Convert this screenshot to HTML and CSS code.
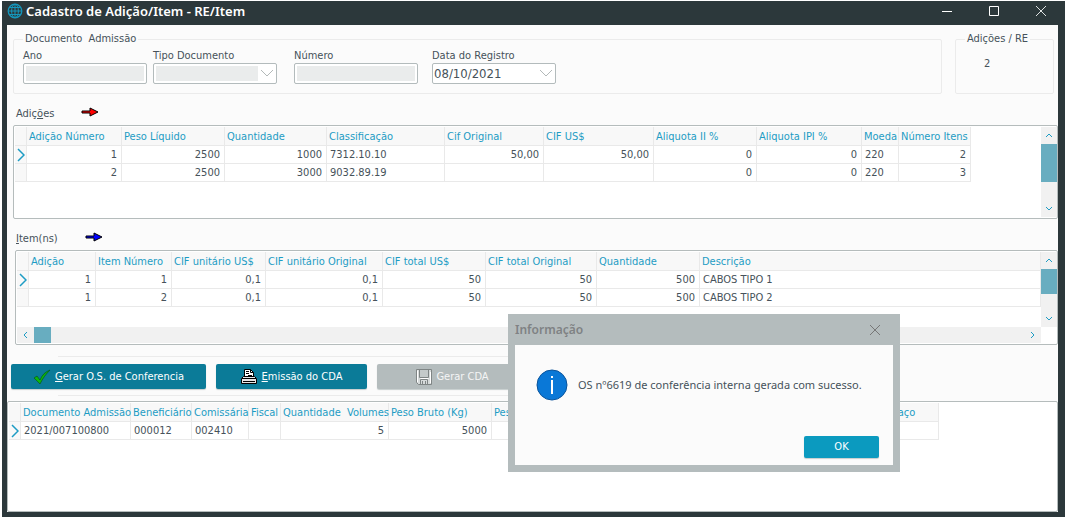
FILE: index.html
```html
<!DOCTYPE html>
<html lang="pt-BR">

<head>
    <meta charset="UTF-8">
    <meta name="viewport" content="width=device-width, initial-scale=1.0">
    <title>Cadastro de Adição/Item - RE/Item</title>

    <link rel="stylesheet" href="styles.css">
</head>

<body>
    <div class="window">
        <header class="titlebar">
            <svg class="globe" width="16" height="16" viewBox="0 0 16 16">
                <g fill="none" stroke="#1497bd">
                    <circle cx="8" cy="8" r="6.8" stroke-width="1.3" />
                    <ellipse cx="8" cy="8" rx="3.4" ry="6.8" />
                    <path d="M8 1v14M1 8h14M2 4.5h12M2 11.5h12" />
                </g>
            </svg>
            <h1>Cadastro de Adição/Item - RE/Item</h1>
            <div class="window-buttons">
                <button type="button" aria-label="Minimizar">
                    <svg width="12" height="12" viewBox="0 0 12 12"><path d="M1 6.5h10" stroke="#fff" /></svg>
                </button>
                <button type="button" aria-label="Maximizar">
                    <svg width="12" height="12" viewBox="0 0 12 12"><path d="M1.5 1.5h9v9h-9z" fill="none" stroke="#fff" /></svg>
                </button>
                <button type="button" aria-label="Fechar">
                    <svg width="12" height="12" viewBox="0 0 12 12"><path d="M1 1l10 10M11 1L1 11" stroke="#dfe3e3" /></svg>
                </button>
            </div>
        </header>

        <main class="content">
            <form class="top">
                <fieldset class="documento">
                    <legend>Documento&nbsp; Admissão</legend>
                    <div class="field">
                        <label for="ano">Ano</label>
                        <input type="text" id="ano" disabled>
                    </div>
                    <div class="field tipo">
                        <label for="tipo">Tipo Documento</label>
                        <div class="combo">
                            <select id="tipo" disabled></select>
                            <svg width="14" height="8" viewBox="0 0 14 8"><path d="M1 1l6 6 6-6" fill="none" stroke="#b3b9b9" /></svg>
                        </div>
                    </div>
                    <div class="field numero">
                        <label for="numero">Número</label>
                        <input type="text" id="numero" disabled>
                    </div>
                    <div class="field data">
                        <label for="data">Data do Registro</label>
                        <div class="combo">
                            <select id="data">
                                <option>08/10/2021</option>
                            </select>
                            <svg width="14" height="8" viewBox="0 0 14 8"><path d="M1 1l6 6 6-6" fill="none" stroke="#b3b9b9" /></svg>
                        </div>
                    </div>
                </fieldset>
                <fieldset class="total">
                    <legend>Adições / RE</legend>
                    <output>2</output>
                </fieldset>
            </form>

            <!-- Adições -->
            <h2>Adiç<u>õ</u>es
                <svg width="18" height="10" viewBox="0 0 18 10"><path d="M1 4h8V1l8 4-8 4V6H1z" fill="#f00" stroke="#000" /></svg>
            </h2>
            <section class="grid adicoes">
                <div class="rows">
                    <table>
                        <colgroup><col><col><col><col><col><col><col><col><col><col><col></colgroup>
                        <thead>
                            <tr>
                                <th></th>
                                <th>Adição Número</th>
                                <th>Peso Líquido</th>
                                <th>Quantidade</th>
                                <th>Classificação</th>
                                <th>Cif Original</th>
                                <th>CIF US$</th>
                                <th>Aliquota II %</th>
                                <th>Aliquota IPI %</th>
                                <th>Moeda</th>
                                <th>Número Itens</th>
                            </tr>
                        </thead>
                        <tbody>
                            <tr>
                                <td class="mark"><svg width="8" height="14" viewBox="0 0 8 14"><path d="M1 1l6 6-6 6" fill="none" stroke="#1d9cc4" stroke-width="1.5" /></svg></td>
                                <td>1</td>
                                <td>2500</td>
                                <td>1000</td>
                                <td class="text">7312.10.10</td>
                                <td>50,00</td>
                                <td>50,00</td>
                                <td>0</td>
                                <td>0</td>
                                <td class="text">220</td>
                                <td>2</td>
                            </tr>
                            <tr>
                                <td class="mark"></td>
                                <td>2</td>
                                <td>2500</td>
                                <td>3000</td>
                                <td class="text">9032.89.19</td>
                                <td></td>
                                <td></td>
                                <td>0</td>
                                <td>0</td>
                                <td class="text">220</td>
                                <td>3</td>
                            </tr>
                        </tbody>
                    </table>
                </div>
                <div class="vscroll">
                    <svg width="8" height="5" viewBox="0 0 8 5"><path d="M1 4l3-3 3 3" fill="none" stroke="#1d9cc4" /></svg>
                    <div class="track"><div class="thumb"></div></div>
                    <svg width="8" height="5" viewBox="0 0 8 5"><path d="M1 1l3 3 3-3" fill="none" stroke="#1d9cc4" /></svg>
                </div>
            </section>

            <!-- Itens -->
            <h2><u>I</u>tem(ns)
                <svg width="18" height="10" viewBox="0 0 18 10"><path d="M1 4h8V1l8 4-8 4V6H1z" fill="#00f" stroke="#000" /></svg>
            </h2>
            <section class="grid itens">
                <div class="rows">
                    <table>
                        <colgroup><col><col><col><col><col><col><col><col><col></colgroup>
                        <thead>
                            <tr>
                                <th></th>
                                <th>Adição</th>
                                <th>Item Número</th>
                                <th>CIF unitário US$</th>
                                <th>CIF unitário Original</th>
                                <th>CIF total US$</th>
                                <th>CIF total Original</th>
                                <th>Quantidade</th>
                                <th>Descrição</th>
                            </tr>
                        </thead>
                        <tbody>
                            <tr>
                                <td class="mark"><svg width="8" height="14" viewBox="0 0 8 14"><path d="M1 1l6 6-6 6" fill="none" stroke="#1d9cc4" stroke-width="1.5" /></svg></td>
                                <td>1</td>
                                <td>1</td>
                                <td>0,1</td>
                                <td>0,1</td>
                                <td>50</td>
                                <td>50</td>
                                <td>500</td>
                                <td class="text">CABOS TIPO 1</td>
                            </tr>
                            <tr>
                                <td class="mark"></td>
                                <td>1</td>
                                <td>2</td>
                                <td>0,1</td>
                                <td>0,1</td>
                                <td>50</td>
                                <td>50</td>
                                <td>500</td>
                                <td class="text">CABOS TIPO 2</td>
                            </tr>
                        </tbody>
                    </table>
                </div>
                <div class="vscroll">
                    <svg width="8" height="5" viewBox="0 0 8 5"><path d="M1 4l3-3 3 3" fill="none" stroke="#1d9cc4" /></svg>
                    <div class="track"><div class="thumb"></div></div>
                    <svg width="8" height="5" viewBox="0 0 8 5"><path d="M1 1l3 3 3-3" fill="none" stroke="#1d9cc4" /></svg>
                </div>
                <div class="hscroll">
                    <svg width="5" height="8" viewBox="0 0 5 8"><path d="M4 1L1 4l3 3" fill="none" stroke="#1d9cc4" /></svg>
                    <div class="track"><div class="thumb"></div></div>
                    <svg width="5" height="8" viewBox="0 0 5 8"><path d="M1 1l3 3-3 3" fill="none" stroke="#1d9cc4" /></svg>
                </div>
            </section>

            <div class="actions">
                <button type="button" class="gerar-os">
                    <svg width="18" height="16" viewBox="0 0 18 16">
                        <path d="M1 9l3-2 3 4c2-5 5-8 10-10-4 4-7 8-10 14z" fill="#0bb80b" stroke="#06491b" stroke-width=".6" />
                    </svg>
                    <span><u>G</u>erar O.S. de Conferencia</span>
                </button>
                <button type="button" class="emissao">
                    <svg width="17" height="17" viewBox="0 0 17 17">
                        <path d="M3.500 8.500v-7h6l3 3v4" fill="#fff" stroke="#000" />
                        <path d="M5 3.500h3M5 5.500h3M7 7.500h4M9.500 1.500v3h3" fill="none" stroke="#000" />
                        <path d="M.5 15.500v-5l2-2h11l2 2v5z" fill="#e6e6e6" stroke="#000" />
                        <path d="M1 10.500h14M2 13.500h12" fill="none" stroke="#000" />
                    </svg>
                    <span><u>E</u>missão do CDA</span>
                </button>
                <button type="button" class="gerar-cda" disabled>
                    <svg width="16" height="16" viewBox="0 0 16 16">
                        <path d="M.5.5h15v15h-13l-2-2z" fill="#d6dada" stroke="#7f8585" />
                        <path d="M3.500 1v7.500h9V1" fill="#c4caca" stroke="#7f8585" />
                        <path d="M4.500 15v-4.500h7V15M6.500 12v3M9.500 12v3" fill="none" stroke="#7f8585" />
                        <path d="M1.500 1.500v11.500M4.500 9.500h8M14.500 3v11" stroke="#fff" />
                    </svg>
                    <span>Gerar CDA</span>
                </button>
            </div>

            <section class="grid documentos">
                <div class="rows">
                    <table>
                        <colgroup><col><col><col><col><col><col><col><col><col></colgroup>
                        <thead>
                            <tr>
                                <th></th>
                                <th>Documento Admissão</th>
                                <th>Beneficiário</th>
                                <th>Comissária</th>
                                <th>Fiscal</th>
                                <th>Quantidade&nbsp; Volumes</th>
                                <th>Peso Bruto (Kg)</th>
                                <th>Peso Líquido (Kg)</th>
                                <th>Espaço</th>
                            </tr>
                        </thead>
                        <tbody>
                            <tr>
                                <td class="mark"><svg width="8" height="14" viewBox="0 0 8 14"><path d="M1 1l6 6-6 6" fill="none" stroke="#1d9cc4" stroke-width="1.5" /></svg></td>
                                <td class="text">2021/007100800</td>
                                <td class="text">000012</td>
                                <td class="text">002410</td>
                                <td></td>
                                <td>5</td>
                                <td>5000</td>
                                <td></td>
                                <td></td>
                            </tr>
                        </tbody>
                    </table>
                </div>
            </section>
        </main>

        <div class="dialog" role="dialog" aria-labelledby="dialogTitle">
            <div class="dialog-title">
                <h3 id="dialogTitle">Informação</h3>
                <button type="button" aria-label="Fechar">
                    <svg width="12" height="12" viewBox="0 0 12 12"><path d="M1 1l10 10M11 1L1 11" stroke="#777" /></svg>
                </button>
            </div>
            <div class="dialog-body">
                <div class="message">
                    <svg width="32" height="32" viewBox="0 0 32 32">
                        <circle cx="16" cy="16" r="15" fill="#0a78d7" stroke="#0b549b" />
                        <path d="M16 11v14M16 7v2" stroke="#fff" stroke-width="2" />
                    </svg>
                    <p>OS nº6619 de conferência interna gerada com sucesso.</p>
                </div>
                <button type="button" class="ok">OK</button>
            </div>
        </div>
    </div>
</body>

</html>
```

FILE: styles.css
```css
* {
    box-sizing: border-box;
    margin: 0;
}

body {
    background: #fff;
    color: #46525a;
    font-family: "DejaVu Sans Condensed", "DejaVu Sans", sans-serif;
    font-size: 11px;
    line-height: 14px;
}

button,
input,
select {
    font: inherit;
    color: inherit;
}

svg {
    display: block;
    flex: none;
}

.window {
    position: relative;
    display: flex;
    flex-direction: column;
    min-height: 100vh;
    padding: 0 7px 5px 5px;
    border-top: 1px solid #fff;
    border-left: 2px solid #fff;
    background: #2c383b;
}

/* Title bar */
.titlebar {
    display: flex;
    align-items: center;
    height: 24px;
    padding-bottom: 5px;
}

.titlebar h1 {
    flex: 1;
    margin-left: 3px;
    color: #fff;
    font-family: "Noto Sans", sans-serif;
    font-size: 13px;
    font-weight: 600;
    line-height: 18px;
}

.window-buttons {
    display: flex;
    gap: 35px;
    margin-right: 11px;
}

.window-buttons button,
.dialog-title button {
    padding: 0;
    border: none;
    background: none;
}

.content {
    flex: 1;
    display: flex;
    flex-direction: column;
    background: #fbfbfb;
}

/* Top fields */
.top {
    display: flex;
    gap: 13px;
    padding: 7px 4px 0 6px;
}

fieldset {
    min-width: 0;
    height: 62px;
    padding: 0;
    border: 1px solid #ebebeb;
    border-radius: 2px;
}

legend {
    padding: 0 2px;
    line-height: 14px;
}

.documento {
    flex: 1;
    display: flex;
    align-items: flex-start;
    padding-left: 9px;
}

.field {
    width: 124px;
    padding-top: 3px;
}

.field label {
    display: block;
}

.field.tipo {
    margin-left: 6px;
}

.field.numero {
    margin-left: 17px;
}

.field.data {
    margin-left: 14px;
}

.field input,
.field select {
    display: block;
    width: 100%;
    height: 21px;
    padding: 0;
    border: 1px solid #b3bbbc;
    border-radius: 2px;
    background: #fff;
    opacity: 1;
    appearance: none;
}

.field input:disabled,
.field select:disabled {
    background: #eaecec;
    box-shadow: inset 0 0 0 2px #fff;
}

.field select:disabled {
    background: linear-gradient(to left, #fff 18px, #eaecec 18px);
}

.data select {
    padding-left: 1px;
    font-size: 13px;
}

.combo {
    position: relative;
}

.combo svg {
    position: absolute;
    top: 6px;
    right: 3px;
}

.total {
    width: 99px;
}

.total legend {
    margin-left: 9px;
}

.total output {
    display: block;
    padding: 11px 0 0 28px;
}

h2 {
    display: flex;
    align-items: center;
    height: 14px;
    margin: 13px 0 4px 9px;
    font-size: 11px;
    font-weight: 400;
}

h2 svg {
    margin: 0 0 4px 27px;
}

/* Grids */
.grid {
    display: grid;
    grid-template-columns: 1fr 16px;
    border: 1px solid #b5bcbc;
    border-radius: 2px;
    padding: 1px 0 1px 1px;
    background: #fff;
}

.rows {
    overflow: hidden;
}

table {
    table-layout: fixed;
    width: 0;
    border-collapse: separate;
    border-spacing: 0;
}

th,
td {
    height: 18px;
    padding: 1px 4px 0 2px;
    border-right: 1px solid #e9e9e9;
    border-bottom: 1px solid #e9e9e9;
    line-height: 16px;
    white-space: nowrap;
}

th {
    height: 19px;
    padding-right: 0;
    background: #f8f8f8;
    color: #1d9cc4;
    font-weight: 400;
    text-align: left;
}

td {
    text-align: right;
}

td.text {
    text-align: left;
    padding-left: 3px;
}

td.mark {
    padding: 0 0 0 2px;
    background: #f8f8f8;
}

.adicoes {
    height: 94px;
    margin-left: 6px;
}

.adicoes col:nth-child(1) { width: 12px; }
.adicoes col:nth-child(2) { width: 95px; }
.adicoes col:nth-child(3) { width: 103px; }
.adicoes col:nth-child(4) { width: 102px; }
.adicoes col:nth-child(5) { width: 118px; }
.adicoes col:nth-child(6) { width: 99px; }
.adicoes col:nth-child(7) { width: 110px; }
.adicoes col:nth-child(8) { width: 103px; }
.adicoes col:nth-child(9) { width: 105px; }
.adicoes col:nth-child(10) { width: 37px; }
.adicoes col:nth-child(11) { width: 72px; }

.itens {
    grid-template-rows: 1fr 16px;
    height: 95px;
    margin-left: 8px;
}

.itens table {
    width: 100%;
}

.itens col:nth-child(1) { width: 12px; }
.itens col:nth-child(2) { width: 67px; }
.itens col:nth-child(3) { width: 76px; }
.itens col:nth-child(4) { width: 94px; }
.itens col:nth-child(5) { width: 117px; }
.itens col:nth-child(6) { width: 103px; }
.itens col:nth-child(7) { width: 111px; }
.itens col:nth-child(8) { width: 103px; }

.documentos {
    flex: 1;
    grid-template-columns: 1fr;
    min-height: 111px;
}

.documentos col:nth-child(1) { width: 12px; }
.documentos col:nth-child(2) { width: 110px; }
.documentos col:nth-child(3) { width: 61px; }
.documentos col:nth-child(4) { width: 57px; }
.documentos col:nth-child(5) { width: 32px; }
.documentos col:nth-child(6) { width: 108px; }
.documentos col:nth-child(7) { width: 103px; }
.documentos col:nth-child(8) { width: 386px; }
.documentos col:nth-child(9) { width: 61px; }

/* Scroll bars */
.vscroll,
.hscroll {
    display: flex;
    align-items: center;
    background: #f1f1f1;
}

.vscroll {
    flex-direction: column;
    padding: 6px 0;
}

.hscroll {
    padding: 0 6px;
}

.track {
    flex: 1;
    display: flex;
}

.vscroll .track {
    width: 16px;
    margin: 6px 0;
}

.hscroll .track {
    height: 16px;
    margin: 0 6px;
}

.thumb {
    background: #68adc0;
}

.adicoes .thumb {
    width: 16px;
    height: 38px;
}

.itens .vscroll .thumb {
    width: 16px;
    height: 25px;
}

.hscroll .thumb {
    width: 17px;
    height: 16px;
}

/* Buttons */
.actions {
    display: flex;
    gap: 10px;
    margin: 11px 0 5px;
    padding: 8px 4px 7px;
    background: linear-gradient(#ebebeb, #ebebeb) 51px 0 / 480px 1px no-repeat,
        linear-gradient(#ebebeb, #ebebeb) 51px 100% / 480px 1px no-repeat;
}

.actions button {
    display: flex;
    align-items: center;
    justify-content: center;
    gap: 4px;
    height: 25px;
    padding: 0;
    border: none;
    border-radius: 2px;
    background: #0b7b98;
    box-shadow: 0 1px 1px #c5cccc;
    color: #fff;
}

.actions button:disabled {
    background: #b4bcbd;
    color: #f4f5f5;
}

.gerar-os {
    width: 195px;
}

.emissao {
    width: 151px;
}

.gerar-cda {
    width: 151px;
}

/* Message dialog */
.dialog {
    position: absolute;
    top: 313px;
    left: 506px;
    width: 392px;
    padding: 0 7px 7px;
    background: #b4bcbd;
}

.dialog-title {
    display: flex;
    align-items: center;
    justify-content: space-between;
    height: 31px;
    padding-right: 12px;
}

.dialog-title h3 {
    color: #7f8284;
    font-family: "Noto Sans", sans-serif;
    font-size: 12px;
    font-weight: 600;
}

.dialog-body {
    display: flex;
    flex-direction: column;
    gap: 35px;
    padding: 24px 14px 7px 21px;
    background: #fbfbfb;
}

.message {
    display: flex;
    align-items: center;
    gap: 10px;
    font-family: "Noto Sans", sans-serif;
}

.ok {
    align-self: flex-end;
    width: 75px;
    height: 22px;
    padding: 0;
    border: none;
    border-radius: 2px;
    background: #0b9abf;
    box-shadow: 0 1px 1px #c5cccc;
    color: #fff;
}
```
